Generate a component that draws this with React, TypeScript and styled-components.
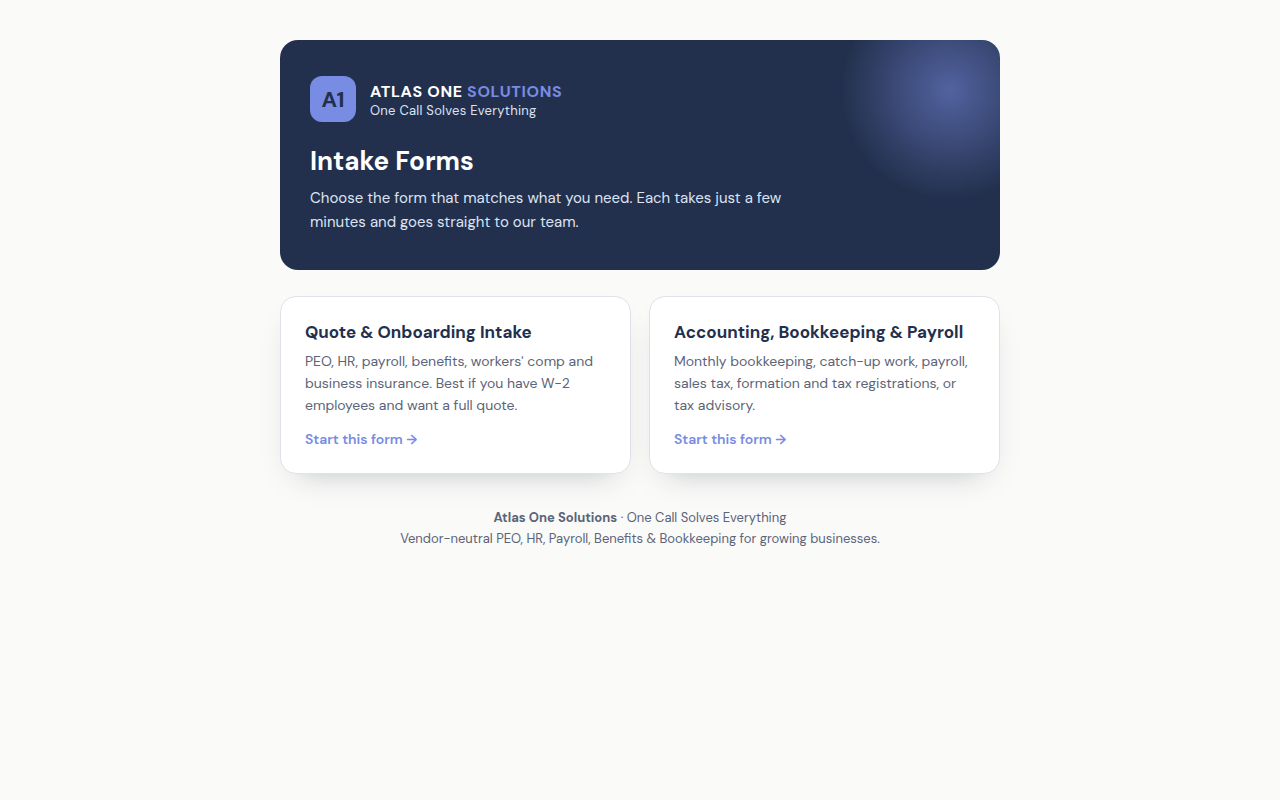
import React from "react";
import styled, { createGlobalStyle } from "styled-components";

const navy = "#23304d";
const accent = "#788ce3";
const slate = "#5b6478";

const GlobalStyle = createGlobalStyle`
  *, *::before, *::after { box-sizing: border-box; }
  body {
    margin: 0;
    background: #fafaf8;
    color: ${navy};
    font-family: "DM Sans", Inter, "Liberation Sans", sans-serif;
    -webkit-font-smoothing: antialiased;
  }
  h1, h2, p { margin: 0; }
`;

const Page = styled.div`
  max-width: 760px;
  margin: 0 auto;
  padding: 40px 20px;
`;

const Hero = styled.header`
  position: relative;
  overflow: hidden;
  padding: 36px 30px;
  border-radius: 18px;
  background: ${navy};
  color: #fff;

  &::after {
    content: "";
    position: absolute;
    top: -60px;
    right: -60px;
    width: 220px;
    height: 220px;
    border-radius: 50%;
    background: radial-gradient(circle, ${accent}, transparent 70%);
    opacity: 0.55;
  }
`;

const Brand = styled.div`
  display: flex;
  align-items: center;
  gap: 14px;
  margin-bottom: 22px;
`;

const Mark = styled.div`
  display: grid;
  place-items: center;
  width: 46px;
  height: 46px;
  border-radius: 12px;
  background: ${accent};
  color: ${navy};
  font-size: 22px;
  font-weight: 700;
`;

const BrandName = styled.div`
  font-size: 16px;
  line-height: 24px;
  font-weight: 700;
  letter-spacing: 0.04em;

  span { color: ${accent}; }
`;

const Tagline = styled.div`
  color: #dbe3f3;
  font-size: 13px;
  line-height: 14px;
  letter-spacing: 0.02em;
`;

const Title = styled.h1`
  margin-bottom: 8px;
  font-size: 26px;
  line-height: 34px;
  font-weight: 700;
`;

const Lead = styled.p`
  max-width: 520px;
  color: #dbe3f3;
  font-size: 15px;
  line-height: 24px;
`;

const Cards = styled.main`
  display: grid;
  grid-template-columns: repeat(auto-fit, minmax(280px, 1fr));
  gap: 18px;
  margin-top: 26px;
`;

const Card = styled.a`
  display: block;
  padding: 24px;
  border: 1px solid #dfe2ea;
  border-radius: 16px;
  background: #fff;
  box-shadow: 0 14px 30px -18px rgba(35, 60, 77, 0.35);
  color: inherit;
  text-decoration: none;
`;

const CardTitle = styled.h2`
  margin-bottom: 7px;
  font-size: 17px;
  line-height: 22px;
  font-weight: 700;
`;

const CardText = styled.p`
  margin-bottom: 14px;
  color: ${slate};
  font-size: 14px;
  line-height: 22px;
`;

const Go = styled.span`
  display: block;
  color: ${accent};
  font-size: 14px;
  line-height: 19px;
  font-weight: 600;
`;

const Footer = styled.footer`
  margin-top: 33px;
  color: ${slate};
  font-size: 13px;
  line-height: 21px;
  text-align: center;
`;

const forms = [
  {
    title: "Quote & Onboarding Intake",
    text: "PEO, HR, payroll, benefits, workers' comp and business insurance. Best if you have W-2 employees and want a full quote.",
    href: "#quote",
  },
  {
    title: "Accounting, Bookkeeping & Payroll",
    text: "Monthly bookkeeping, catch-up work, payroll, sales tax, formation and tax registrations, or tax advisory.",
    href: "#accounting",
  },
];

export default function App() {
  return (
    <>
      <GlobalStyle />
      <Page>
        <Hero>
          <Brand>
            <Mark>A1</Mark>
            <div>
              <BrandName>
                ATLAS ONE <span>SOLUTIONS</span>
              </BrandName>
              <Tagline>One Call Solves Everything</Tagline>
            </div>
          </Brand>
          <Title>Intake Forms</Title>
          <Lead>
            Choose the form that matches what you need. Each takes just a few minutes and goes
            straight to our team.
          </Lead>
        </Hero>
        <Cards>
          {forms.map((form) => (
            <Card key={form.href} href={form.href}>
              <CardTitle>{form.title}</CardTitle>
              <CardText>{form.text}</CardText>
              <Go>Start this form →</Go>
            </Card>
          ))}
        </Cards>
        <Footer>
          <p>
            <strong>Atlas One Solutions</strong> · One Call Solves Everything
          </p>
          <p>Vendor-neutral PEO, HR, Payroll, Benefits &amp; Bookkeeping for growing businesses.</p>
        </Footer>
      </Page>
    </>
  );
}
